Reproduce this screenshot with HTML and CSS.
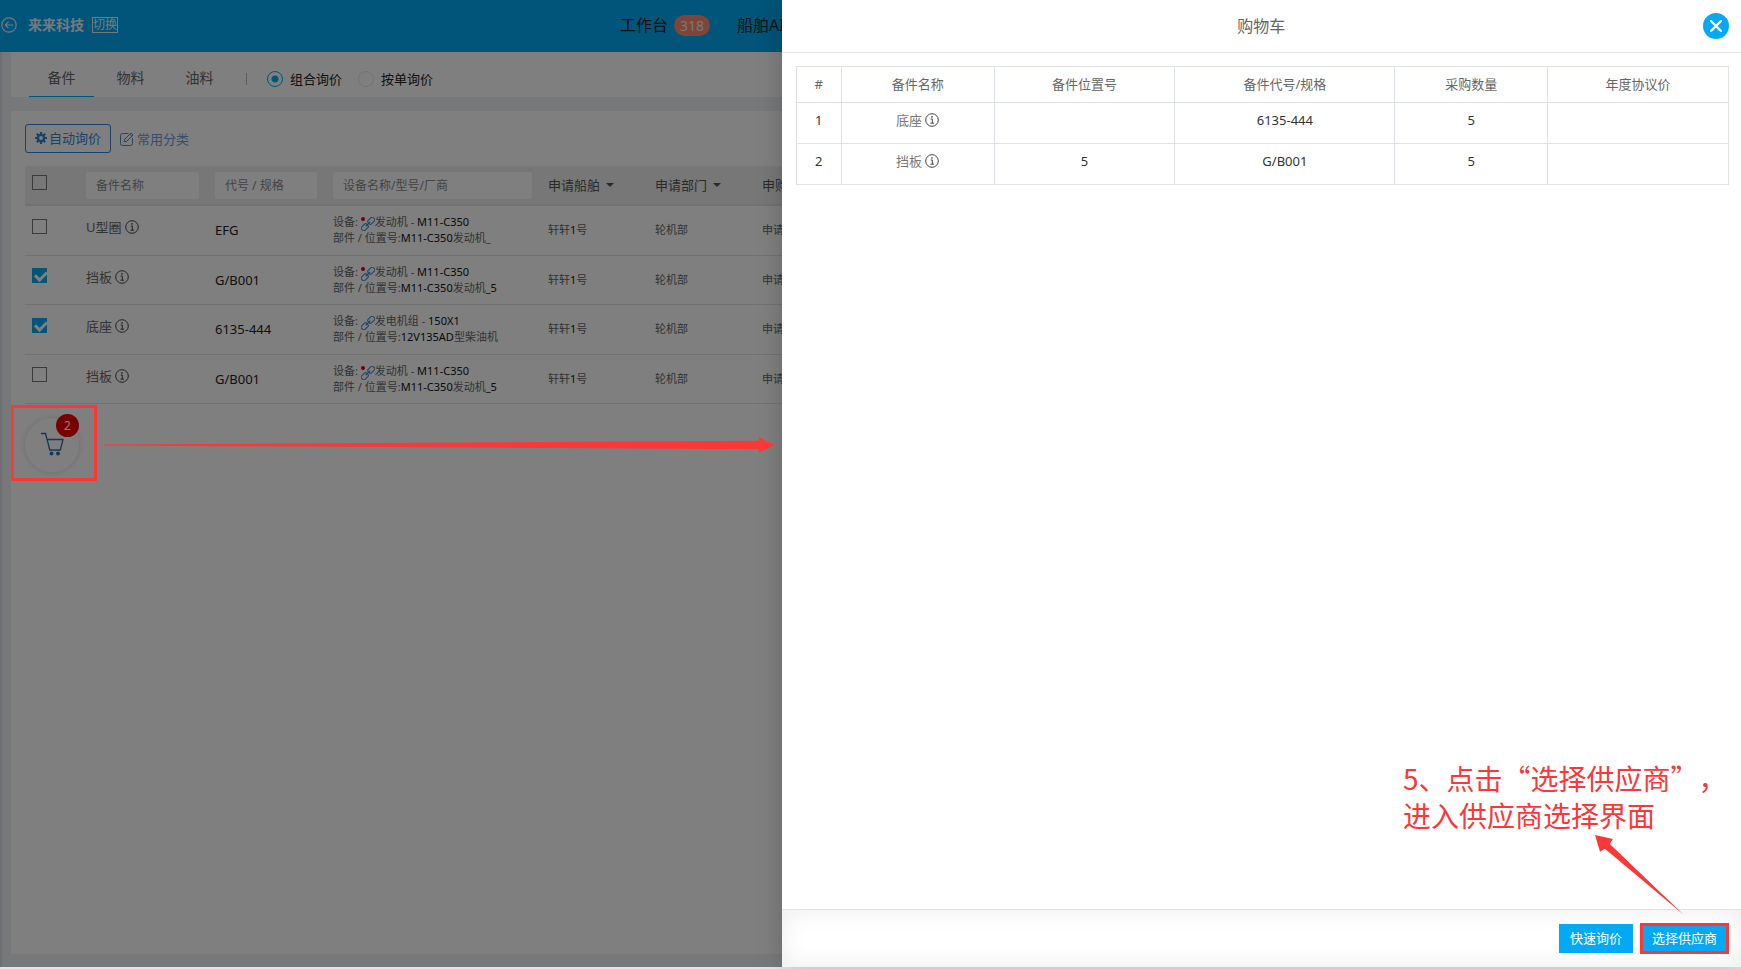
FILE: index.html
```html
<!DOCTYPE html>
<html lang="zh-CN">
<head>
<meta charset="utf-8">
<title>购物车</title>
<link rel="stylesheet" href="styles.css">
</head>
<body>
<svg class="sprite" aria-hidden="true">
  <symbol id="info" viewBox="0 0 14 14"><circle cx="7" cy="7" r="6.3" fill="none" stroke="currentColor"/><path d="M5.7 6h1.6v4.2M5.4 10.2h3.6" fill="none" stroke="currentColor"/><circle cx="7" cy="3.9" r=".8" fill="currentColor"/></symbol>
  <symbol id="link" viewBox="0 0 14 14"><g fill="none" stroke="currentColor" stroke-width="1.1" transform="rotate(-45 7 7)"><rect x="-1.300" y="4.600" width="7.300" height="4.800" rx="1.600"/><rect x="8" y="4.600" width="7.300" height="4.800" rx="1.600"/><path d="M3.800 7h6.400"/></g></symbol>
</svg>
<div class="app">
  <header class="topbar">
    <button class="back" aria-label="返回"><svg viewBox="0 0 16 16" width="16" height="16" fill="none" stroke="currentColor" stroke-width="1.2"><circle cx="8" cy="8" r="7.2"/><path d="M12 8H4.5M7.5 4.8L4.3 8l3.2 3.2"/></svg></button>
    <strong class="company">来来科技</strong>
    <button class="switch">切换</button>
    <nav class="topnav">
      <a href="#">工作台 <span class="count">318</span></a>
      <a href="#">船舶AI</a>
    </nav>
  </header>
  <main class="main">
    <section class="tabs">
      <button class="tab tab-on">备件</button>
      <button class="tab">物料</button>
      <button class="tab">油料</button>
      <span class="divider"></span>
      <label class="mode"><input type="radio" name="mode" checked>组合询价</label>
      <label class="mode"><input type="radio" name="mode">按单询价</label>
    </section>
    <section class="panel">
      <div class="actions">
        <button class="auto"><svg viewBox="0 0 12 12" width="12" height="12"><circle cx="6" cy="6" r="3.1" fill="none" stroke="currentColor" stroke-width="2.4"/><path d="M6 0v2.5M6 9.500v2.500M0 6h2.500M9.500 6H12M1.800 1.800l1.700 1.700M8.500 8.500l1.700 1.700M10.200 1.800L8.500 3.500M3.500 8.500l-1.700 1.700" stroke="currentColor" stroke-width="2.200"/></svg>自动询价</button>
        <a class="category" href="#"><svg viewBox="0 0 14 14" width="14" height="14" fill="none" stroke="currentColor"><path d="M8.500 1.500H2.500a2 2 0 0 0-2 2v8a2 2 0 0 0 2 2h8a2 2 0 0 0 2-2V6"/><path d="M4 10l.8-2.800L11 1l2 2-6.200 6.200zM9.800 2.200l2 2"/></svg>常用分类</a>
      </div>
      <table class="parts">
        <colgroup><col class="c-check"><col class="c-name"><col class="c-code"><col class="c-equip"><col class="c-ship"><col class="c-ship"><col></colgroup>
        <thead><tr>
          <th><input type="checkbox" aria-label="全选"></th>
          <th><input class="filter" type="text" placeholder="备件名称" aria-label="备件名称"></th>
          <th><input class="filter" type="text" placeholder="代号 / 规格" aria-label="代号 / 规格"></th>
          <th><input class="filter" type="text" placeholder="设备名称/型号/厂商" aria-label="设备名称/型号/厂商"></th>
          <th><button class="drop">申请船舶</button></th>
          <th><button class="drop">申请部门</button></th>
          <th>申购</th>
        </tr></thead>
        <tbody>
          <tr><td><input type="checkbox" aria-label="U型圈"></td><td class="name">U型圈 <svg class="info"><use href="#info"/></svg></td><td class="code">EFG</td><td class="small">设备: <span class="chain dot"><svg><use href="#link"/></svg></span>发动机 - <b>M11-C350</b><br>部件 / 位置号:<b>M11-C350</b>发动机_</td><td class="small">轩轩<b>1</b>号</td><td class="small">轮机部</td><td class="small">申请</td></tr>
          <tr><td><input type="checkbox" aria-label="挡板" checked></td><td class="name">挡板 <svg class="info"><use href="#info"/></svg></td><td class="code">G/B001</td><td class="small">设备: <span class="chain dot"><svg><use href="#link"/></svg></span>发动机 - <b>M11-C350</b><br>部件 / 位置号:<b>M11-C350</b>发动机<b>_5</b></td><td class="small">轩轩<b>1</b>号</td><td class="small">轮机部</td><td class="small">申请</td></tr>
          <tr><td><input type="checkbox" aria-label="底座" checked></td><td class="name">底座 <svg class="info"><use href="#info"/></svg></td><td class="code">6135-444</td><td class="small">设备: <span class="chain"><svg><use href="#link"/></svg></span>发电机组 - <b>150X1</b><br>部件 / 位置号:<b>12V135AD</b>型柴油机</td><td class="small">轩轩<b>1</b>号</td><td class="small">轮机部</td><td class="small">申请</td></tr>
          <tr><td><input type="checkbox" aria-label="挡板"></td><td class="name">挡板 <svg class="info"><use href="#info"/></svg></td><td class="code">G/B001</td><td class="small">设备: <span class="chain dot"><svg><use href="#link"/></svg></span>发动机 - <b>M11-C350</b><br>部件 / 位置号:<b>M11-C350</b>发动机<b>_5</b></td><td class="small">轩轩<b>1</b>号</td><td class="small">轮机部</td><td class="small">申请</td></tr>
        </tbody>
      </table>
      <button class="cart" aria-label="购物车"><svg viewBox="0 0 24 24" width="24" height="24" fill="none" stroke="currentColor" stroke-width="1.300"><path d="M1 1.500h4.500L9.800 18h10.500L23 7.500H7"/><circle cx="11.500" cy="21.500" r="1.300" fill="currentColor"/><circle cx="18" cy="21.500" r="1.300" fill="currentColor"/></svg><span class="cart-count">2</span></button>
    </section>
  </main>
</div>
<div class="mask"></div>
<aside class="drawer">
  <header class="drawer-head"><h1>购物车</h1><button class="close" aria-label="关闭"><svg viewBox="0 0 26 26" width="26" height="26"><path d="M8 8l10 10M18 8l-10 10" stroke="currentColor" stroke-width="2.400" stroke-linecap="round"/></svg></button></header>
  <div class="drawer-body">
    <table class="order">
      <colgroup><col class="o-num"><col class="o-name"><col class="o-pos"><col class="o-code"><col class="o-name"><col class="o-pos"></colgroup>
      <thead><tr><th>#</th><th>备件名称</th><th>备件位置号</th><th>备件代号/规格</th><th>采购数量</th><th>年度协议价</th></tr></thead>
      <tbody>
        <tr><td>1</td><td class="soft">底座 <svg class="info"><use href="#info"/></svg></td><td></td><td>6135-444</td><td>5</td><td></td></tr>
        <tr><td>2</td><td class="soft">挡板 <svg class="info"><use href="#info"/></svg></td><td>5</td><td>G/B001</td><td>5</td><td></td></tr>
      </tbody>
    </table>
  </div>
  <footer class="drawer-foot"><button class="btn">快速询价</button><button class="btn btn-marked">选择供应商</button></footer>
</aside>
<div class="mark-box"></div>
<svg class="mark-arrow" viewBox="0 0 671 18" preserveAspectRatio="none"><path d="M0 8L655 4V0l16 8.500-16 8V13L0 9z"/></svg>
<p class="note">5、点击“选择供应商”，<br>进入供应商选择界面</p>
<svg class="note-arrow" viewBox="0 0 90 82"><path d="M0 0l18 4-3 5 75 72L10 14l-5 3z"/></svg>
</body>
</html>
```
FILE: styles.css
```css
* { box-sizing: border-box; }
body {
  margin: 0;
  height: 100vh;
  overflow: hidden;
  position: relative;
  padding-bottom: 2px;
  background: #e1e7e5;
  color: #333;
  font: 13px/20px "Noto Sans", "Noto Sans CJK SC", sans-serif;
}
button, input { font: inherit; color: inherit; margin: 0; }
button { border: 0; padding: 0; background: none; }
a { color: inherit; text-decoration: none; }
table { border-collapse: collapse; table-layout: fixed; width: 100%; }
.sprite { position: absolute; width: 0; height: 0; }

.app { height: 100%; display: flex; flex-direction: column; background: #eef1f5; }
.topbar {
  flex: none;
  display: flex;
  align-items: center;
  height: 52px;
  padding: 0 0 2px 1px;
  background: #03a9f4;
  color: #fff;
}
.back { display: flex; margin-right: 11px; color: #e6f4fc; }
.company { font-size: 14px; opacity: .9; }
.switch { margin-left: 8px; border: 1px solid #e6f4fc; font-size: 12px; line-height: 14px; height: 16px; color: #e6f4fc; }
.topnav { display: flex; margin-left: auto; width: 1121px; gap: 27px; color: #222; font-size: 16px; }
.topnav a { display: flex; align-items: center; gap: 6px; white-space: nowrap; }
.count { padding: 0 6px; border-radius: 11px; background: #ff8b72; color: #eee; font-size: 14px; line-height: 21px; }

.main {
  flex: 1;
  display: flex;
  flex-direction: column;
  gap: 14px;
  padding: 0 11px 13px 9px;
  border-left: 2px solid #dcdee4;
}
.tabs { display: flex; align-items: center; height: 45px; padding: 8px 18px 0; background: #fff; }
.tab { width: 65px; height: 37px; margin-right: 4px; padding-bottom: 1px; font-size: 14px; color: #666; border-bottom: 1px solid transparent; }
.tab-on { border-bottom-color: #03a9f4; }
.divider { width: 1px; height: 12px; margin: 0 20px 0 10px; background: #bbb; }
.mode { display: flex; align-items: center; gap: 7px; margin-right: 16px; color: #222; }
.mode input { appearance: none; width: 16px; height: 16px; border: 1px solid #e4e4e4; border-radius: 50%; }
.mode input:checked { border-color: #03a9f4; background: radial-gradient(circle, #03a9f4 3px, transparent 4px); }

.panel { flex: 1; padding: 13px 14px; background: #fff; overflow: hidden; }
.actions { display: flex; align-items: center; gap: 9px; margin-bottom: 13px; color: #2f86d6; }
.auto { display: flex; align-items: center; gap: 2px; height: 29px; padding: 0 9px 1px; border: 1px solid #2f86d6; border-radius: 3px; }
.category { display: flex; align-items: center; gap: 3px; color: #6a9bdc; }
.category svg { color: #4a8ecb; }

.c-check { width: 53px; }
.c-name { width: 129px; }
.c-code { width: 118px; }
.c-equip { width: 215px; }
.c-ship { width: 107px; }
.parts th, .parts td { padding: 0 8px; text-align: left; font-weight: 400; white-space: nowrap; }
.parts th { height: 39px; background: #eee; border-bottom: 2px solid #e2e2e2; color: #555; }
.parts td { height: 50px; border-bottom: 1px solid #e4e4e4; }
.parts tr:nth-child(even) td { height: 49px; }
.parts input[type="checkbox"] { appearance: none; display: block; width: 15px; height: 15px; margin-left: -1px; border: 1px solid #777; position: relative; }
.parts input[type="checkbox"]:checked { background: #03a9f4; border-color: #03a9f4; }
.parts input[type="checkbox"]:checked::after {
  content: "";
  position: absolute;
  left: 4px;
  top: 0;
  width: 5px;
  height: 9px;
  border: solid #fff;
  border-width: 0 3px 3px 0;
  transform: rotate(45deg);
}
.parts td:first-child { padding-bottom: 8px; }
.parts th:first-child { padding-bottom: 5px; }
.filter { display: block; width: 100%; height: 27px; padding: 0 10px; border: 0; border-radius: 3px; background: #fff; font-size: 12px; }
.filter::placeholder { color: #888; opacity: 1; }
.drop { display: flex; align-items: center; gap: 6px; }
.drop::after { content: ""; border: 4px solid transparent; border-top-color: currentColor; border-bottom: 0; }
.parts .name { padding-bottom: 6px; color: #666; }
.code { color: #222; }
.parts .small { font-size: 11px; line-height: 16px; color: #666; }
.small b { font-weight: 400; color: #111; }
.info { width: 14px; height: 14px; vertical-align: -2px; color: #444; }
.chain { position: relative; display: inline-block; height: 12px; color: #3d8fd0; vertical-align: -3px; }
.chain svg { display: block; width: 14px; height: 14px; }
.dot::before { content: ""; position: absolute; left: 0; top: 0; width: 4px; height: 4px; border-radius: 50%; background: #e00000; }

.cart {
  position: relative;
  display: grid;
  place-items: center;
  width: 54px;
  height: 54px;
  margin-top: 14px;
  padding-bottom: 2px;
  border-radius: 50%;
  box-shadow: 0 0 6px rgba(0, 0, 0, .15);
  color: #2f6ea8;
}
.cart-count {
  position: absolute;
  right: 0;
  top: -4px;
  width: 23px;
  height: 23px;
  border-radius: 50%;
  background: #f00000;
  color: #fff;
  font-size: 12px;
  line-height: 23px;
}

.mask { position: absolute; inset: 0 0 2px; background: rgba(0, 0, 0, .5); }

.drawer {
  position: absolute;
  top: 0;
  right: 0;
  bottom: 2px;
  width: 55.1%;
  display: flex;
  flex-direction: column;
  background: #fff;
  box-shadow: 0 0 24px rgba(0, 0, 0, .2);
}
.drawer-head { flex: none; display: flex; align-items: center; height: 53px; padding: 0 12px 0 38px; border-bottom: 1px solid #e2e4e6; }
.drawer-head h1 { flex: 1; margin: 0; font-size: 16px; font-weight: 400; text-align: center; color: #666; }
.close { display: flex; border-radius: 50%; background: #03a9f4; color: #fff; }
.drawer-body { flex: 1; padding: 13px 12px 0 14px; }
.o-num { width: 45px; }
.o-name { width: 16.4%; }
.o-pos { width: 19.4%; }
.order th, .order td { padding: 0 0 2px; border: 1px solid #dfe2e6; text-align: center; }
.order th { height: 36px; font-weight: 400; color: #666; }
.order td { height: 41px; padding-bottom: 6px; }
.order .soft { color: #777; }
.drawer-foot {
  display: flex;
  justify-content: flex-end;
  align-items: center;
  gap: 7px;
  height: 58px;
  padding: 0 12px;
  border-top: 1px solid #dfe3e2;
  box-shadow: inset 0 0 24px rgba(0, 0, 0, .08);
}
.btn { height: 29px; padding: 0 11px 2px; background: #03a9f4; color: #fff; }
.btn-marked { height: 31px; border: 3px solid #fc3737; padding: 0 9px; line-height: 23px; }

.mark-box { position: absolute; left: 11px; top: 405px; width: 86px; height: 76px; border: 3px solid #fc3737; }
.mark-arrow { position: absolute; left: 104px; top: 437px; width: 671px; height: 17px; fill: #fc3737; }
.note { position: absolute; right: 14px; bottom: 135px; width: 324px; margin: 0; font: 28px/37px "Noto Sans CJK SC", sans-serif; text-spacing-trim: space-all; white-space: nowrap; color: #fc3737; }
.note-arrow { position: absolute; right: 57px; bottom: 53px; width: 89px; height: 81px; fill: #fc3737; }
```
